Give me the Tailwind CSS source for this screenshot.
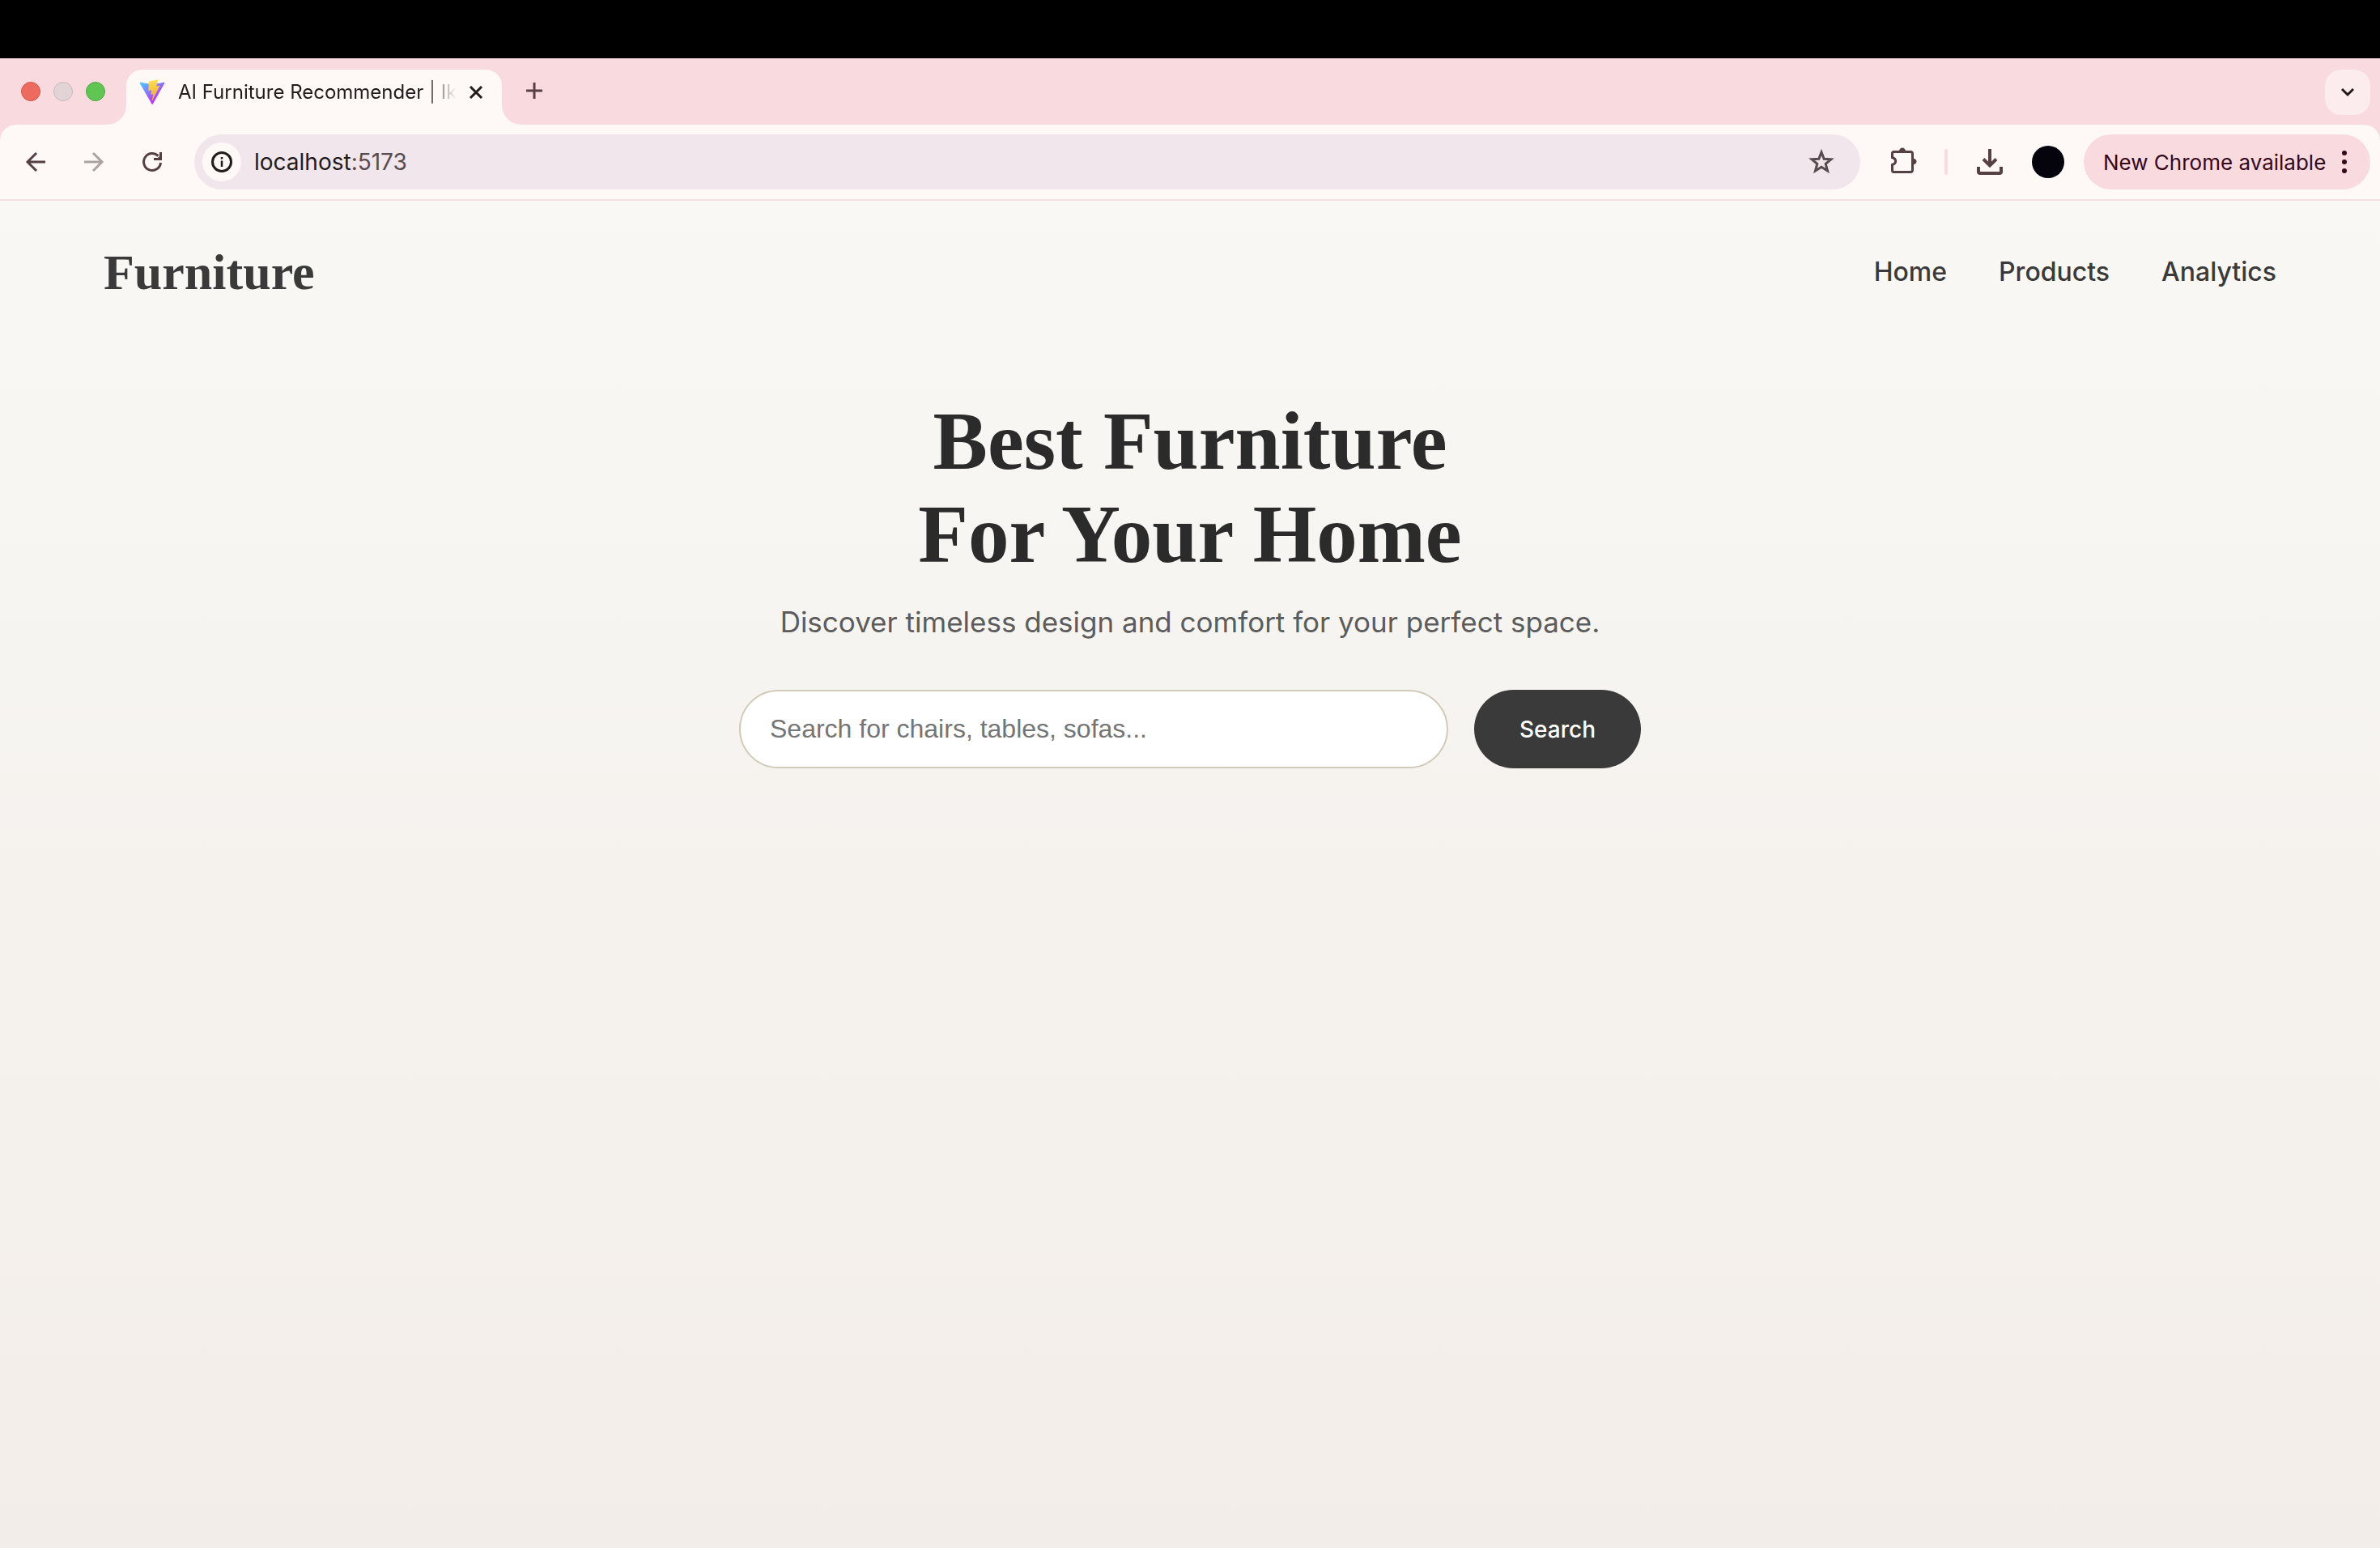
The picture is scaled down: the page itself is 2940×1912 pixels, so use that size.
<!DOCTYPE html>
<html lang="en">
<head>
<meta charset="utf-8">
<title>AI Furniture Recommender</title>
<script src="https://cdn.jsdelivr.net/npm/@tailwindcss/browser@4"></script>
</head>
<body class="flex min-h-screen flex-col bg-[#f9dade] font-['Inter',sans-serif]">
  <div class="h-[72px] bg-black"></div>

  <!-- Tab strip -->
  <div class="flex h-[82px] items-end pr-3">
    <div class="flex h-[82px] w-[132px] items-center gap-4 pl-[26px]">
      <button aria-label="Close window" class="size-6 shrink-0 rounded-full border border-[#d5574c] bg-[#ed6a5e]"></button>
      <button aria-label="Minimize window" class="size-6 shrink-0 rounded-full border border-[#c6b9bc] bg-[#e1d3d6]"></button>
      <button aria-label="Zoom window" class="size-6 shrink-0 rounded-full border border-[#4fab43] bg-[#61c554]"></button>
    </div>
    <svg class="size-6 shrink-0" viewBox="0 0 24 24" fill="#fef9f6"><path d="M0 24A24 24 0 0 0 24 0V24Z"/></svg>
    <div class="flex h-[68px] w-[464px] items-center rounded-t-[20px] bg-[#fef9f6] pb-3 pl-4 pr-5">
      <svg class="size-8 shrink-0" viewBox="0 0 410 404">
        <defs>
          <linearGradient id="shield" x1="6" y1="33" x2="235" y2="344" gradientUnits="userSpaceOnUse"><stop stop-color="#41d1ff"/><stop offset="1" stop-color="#bd34fe"/></linearGradient>
          <linearGradient id="bolt" x1="194" y1="9" x2="236" y2="293" gradientUnits="userSpaceOnUse"><stop stop-color="#ffea83"/><stop offset=".083" stop-color="#fbdc50"/><stop offset="1" stop-color="#f5a93c"/></linearGradient>
        </defs>
        <path fill="url(#shield)" d="M399.641 59.5246L215.643 388.545C211.844 395.338 202.084 395.378 198.228 388.618L10.5817 59.5563C6.38087 52.1896 12.6802 43.2665 21.0281 44.7586L205.223 77.6824C206.398 77.8924 207.601 77.8904 208.776 77.6763L389.119 44.8058C397.439 43.2894 403.768 52.1434 399.641 59.5246Z"/>
        <path fill="url(#bolt)" d="M292.965 1.5744L156.801 28.2552C154.563 28.6937 152.906 30.5903 152.771 32.8664L144.395 174.33C144.198 177.662 147.258 180.248 150.51 179.498L188.42 170.749C191.967 169.931 195.172 173.055 194.443 176.622L183.18 231.775C182.422 235.487 185.907 238.661 189.532 237.56L212.947 230.446C216.577 229.344 220.065 232.527 219.297 236.242L201.398 322.875C200.278 328.294 207.486 331.249 210.492 326.603L212.5 323.5L323.454 102.072C325.312 98.3645 322.108 94.137 318.036 94.9228L279.014 102.454C275.347 103.161 272.227 99.746 273.262 96.1583L298.731 7.86689C299.767 4.27314 296.636 0.855181 292.965 1.5744Z"/>
      </svg>
      <span class="ml-4 shrink-0 bg-linear-to-r from-[#231a1c] from-88% to-transparent bg-clip-text text-2xl whitespace-nowrap text-transparent">AI Furniture Recommender | Ik</span>
      <button aria-label="Close tab" class="ml-auto size-6 shrink-0"><svg viewBox="0 0 24 24" fill="none" stroke="#231a1c" stroke-width="3"><path d="M5 5L19 19M19 5L5 19"/></svg></button>
    </div>
    <svg class="size-6 shrink-0" viewBox="0 0 24 24" fill="#fef9f6"><path d="M0 0A24 24 0 0 0 24 24H0Z"/></svg>
    <button aria-label="New tab" class="mb-[30px] ml-1 size-6"><svg viewBox="0 0 24 24" fill="none" stroke="#574044" stroke-width="3"><path d="M12 2V22M2 12H22"/></svg></button>
    <button aria-label="Search tabs" class="mb-3 ml-auto flex size-14 items-center justify-center rounded-[20px] bg-[#fcecee]"><svg class="size-6" viewBox="0 0 24 24" fill="none" stroke="#231a1c" stroke-width="3"><path d="M5 8L12 15L19 8"/></svg></button>
  </div>

  <!-- Toolbar -->
  <div class="flex h-[94px] items-center rounded-t-[20px] border-b-2 border-[#f3dfe1] bg-[#fef9f6] pr-3">
    <div class="flex w-[240px] shrink-0 items-center gap-10 pl-7">
      <button aria-label="Back" class="size-8"><svg viewBox="0 0 32 32" fill="none" stroke="#574044" stroke-width="3"><path d="M28 16H6M17 5L6 16L17 27"/></svg></button>
      <button aria-label="Forward" class="size-8"><svg viewBox="0 0 32 32" fill="none" stroke="#aba3a3" stroke-width="3"><path d="M4 16H26M15 5L26 16L15 27"/></svg></button>
      <button aria-label="Reload" class="size-8"><svg viewBox="0 0 32 32" fill="none" stroke="#574044" stroke-width="3"><path d="M26.500 17A10.500 10.500 0 1 1 23.500 8.600"/><path d="M28 4V14H18V11H23L25 9V4Z" fill="#574044" stroke="none"/></svg></button>
    </div>
    <div class="flex h-[68px] flex-1 items-center rounded-full bg-[#f1e6ec] pl-[10px] pr-8">
      <button aria-label="Site information" class="flex size-12 items-center justify-center rounded-full bg-[#fef9f6]"><svg class="size-7" viewBox="0 0 28 28" fill="none" stroke="#231a1c" stroke-width="3"><circle cx="14" cy="14" r="11.500"/><path d="M14 12.500V20M14 8V10.500" stroke-width="2.500"/></svg></button>
      <div class="ml-4 flex-1 text-[28px] text-[#574b4e]"><span class="text-[#231a1c]">localhost</span>:5173</div>
      <button aria-label="Bookmark this tab" class="size-8"><svg viewBox="0 0 32 32" fill="none" stroke="#574b4e" stroke-width="3"><path d="M16 4L19.200 12.200L28 12.800L21.200 18.400L23.500 27L16 22.300L8.500 27L10.800 18.400L4 12.800L12.800 12.200Z"/></svg></button>
    </div>
    <button aria-label="Extensions" class="ml-9 size-9 shrink-0"><svg viewBox="0 0 36 36" fill="none" stroke="#574044" stroke-width="3"><path d="M5.500 5.500H26Q28.500 5.500 28.500 8V28Q28.500 30.500 26 30.500H5.500Q3.500 30.500 3.500 28.500V21.500C9 20 9 14 3.500 12.500V7.500Q3.500 5.500 5.500 5.500Z"/><path d="M12 5C12 -1 20 -1 20 5ZM29 13.500C35 14 35 21 29 21.500Z" fill="#574044" stroke="none"/></svg></button>
    <div class="ml-8 h-8 w-1 shrink-0 rounded-full bg-[#f9dade]"></div>
    <button aria-label="Downloads" class="ml-9 size-8 shrink-0"><svg viewBox="0 0 32 32" fill="none" stroke="#574044" stroke-width="4"><path d="M16 0V20M8 12.500L16 20.500L24 12.500M2 22V28Q2 30 4 30H28Q30 30 30 28V22"/></svg></button>
    <button aria-label="Profile" class="ml-9 size-10 shrink-0 rounded-full bg-[#05040c]"></button>
    <button class="ml-6 flex h-[68px] w-[354px] shrink-0 items-center justify-between rounded-full bg-[#f9dade] pl-6 pr-7 text-[26px] text-[#35081a]">New Chrome available<svg class="h-7 w-2" viewBox="0 0 8 28" fill="#35081a"><circle cx="4" cy="3" r="3"/><circle cx="4" cy="14" r="3"/><circle cx="4" cy="25" r="3"/></svg></button>
  </div>

  <!-- Site -->
  <div class="flex-1 bg-linear-to-b from-[#f9f8f4] to-[#f2ede9]">
    <header class="flex items-center justify-between px-32 pt-12">
      <a href="#" class="font-['Liberation_Serif',serif] text-[62px] leading-20 font-bold text-[#3a3a3a]">Furniture</a>
      <nav class="flex gap-16 text-[32px] leading-20 font-medium text-[#3a3a3a]">
        <a href="#">Home</a><a href="#">Products</a><a href="#">Analytics</a>
      </nav>
    </header>
    <main class="flex flex-col items-center pt-28 text-center">
      <h1 class="font-['Liberation_Serif',serif] text-[101px] leading-[115px] font-bold text-[#2b2b2b]">Best Furniture<br>For Your Home</h1>
      <p class="mt-[22px] text-[35px] leading-14 text-[#5c5c5c]">Discover timeless design and comfort for your perfect space.</p>
      <form class="mt-14 flex gap-8">
        <input type="text" aria-label="Search furniture" placeholder="Search for chairs, tables, sofas..." class="h-[97px] w-[876px] rounded-full border-2 border-[#d2cab9] bg-white px-9 font-['Liberation_Sans',sans-serif] text-[32px] placeholder:text-[#757575]">
        <button type="button" class="h-[97px] w-[206px] rounded-full bg-[#3a3a3a] text-[28px] font-medium text-white">Search</button>
      </form>
    </main>
  </div>
</body>
</html>
